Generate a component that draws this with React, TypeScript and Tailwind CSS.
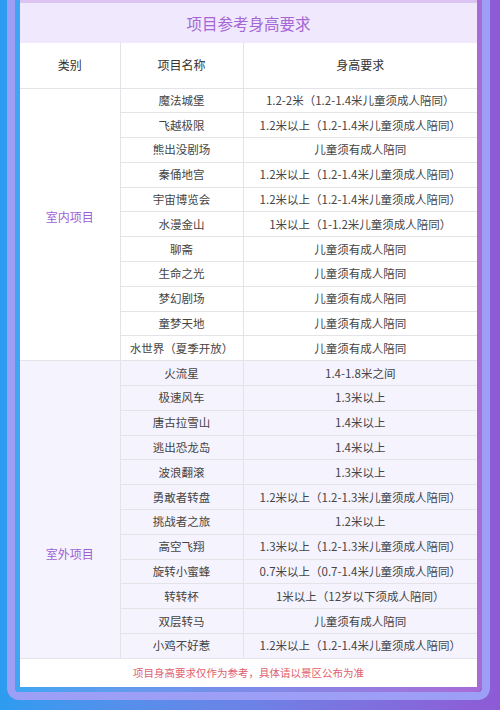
import React from 'react';

type Row = [string, string];

const indoor: Row[] = [
  ['魔法城堡', '1.2-2米（1.2-1.4米儿童须成人陪同）'],
  ['飞越极限', '1.2米以上（1.2-1.4米儿童须成人陪同）'],
  ['熊出没剧场', '儿童须有成人陪同'],
  ['秦俑地宫', '1.2米以上（1.2-1.4米儿童须成人陪同）'],
  ['宇宙博览会', '1.2米以上（1.2-1.4米儿童须成人陪同）'],
  ['水漫金山', '1米以上（1-1.2米儿童须成人陪同）'],
  ['聊斋', '儿童须有成人陪同'],
  ['生命之光', '儿童须有成人陪同'],
  ['梦幻剧场', '儿童须有成人陪同'],
  ['童梦天地', '儿童须有成人陪同'],
  ['水世界（夏季开放）', '儿童须有成人陪同'],
];

const outdoor: Row[] = [
  ['火流星', '1.4-1.8米之间'],
  ['极速风车', '1.3米以上'],
  ['唐古拉雪山', '1.4米以上'],
  ['逃出恐龙岛', '1.4米以上'],
  ['波浪翻滚', '1.3米以上'],
  ['勇敢者转盘', '1.2米以上（1.2-1.3米儿童须成人陪同）'],
  ['挑战者之旅', '1.2米以上'],
  ['高空飞翔', '1.3米以上（1.2-1.3米儿童须成人陪同）'],
  ['旋转小蜜蜂', '0.7米以上（0.7-1.4米儿童须成人陪同）'],
  ['转转杯', '1米以上（12岁以下须成人陪同）'],
  ['双层转马', '儿童须有成人陪同'],
  ['小鸡不好惹', '1.2米以上（1.2-1.4米儿童须成人陪同）'],
];

function Section({ label, rows, shaded, labelPad }: { label: string; rows: Row[]; shaded?: boolean; labelPad: string }) {
  const bg = shaded ? 'bg-[#f5f3fd]' : 'bg-white';
  return (
    <>
      {rows.map(([name, req], i) => (
        <tr key={name} className={`h-[24.8px] ${bg}`}>
          {i === 0 && (
            <td rowSpan={rows.length} className={`border border-[#e3e3e8] border-l-0 align-top text-center text-[12px] text-[#9d5fd4] ${labelPad}`}>
              {label}
            </td>
          )}
          <td className="border border-[#e3e3e8] text-center text-[11.5px] text-[#444] p-0">{name}</td>
          <td className="border border-[#e3e3e8] border-r-0 text-center text-[11.5px] text-[#444] p-0">{req}</td>
        </tr>
      ))}
    </>
  );
}

export default function App() {
  return (
    <div
      className="w-[500px] h-[710px] overflow-hidden bg-gradient-to-r from-[#2c9cf0] via-[#6c82e6] to-[#8e5ad6] pl-[7px] pr-[10px] pb-[10px]"
      style={{ fontFamily: '"Noto Sans CJK SC", "Noto Sans", sans-serif' }}
    >
      <div className="h-full border-x-[8px] border-b-[8px] border-[#9c9ff5] rounded-b-[12px] overflow-hidden">
        <div className="h-full bg-gradient-to-r from-[#3ea6f2] via-[#7c8ce8] to-[#a86bd6] px-[5px] pb-[5px] rounded-b-[6px]">
          <div className="h-full bg-white flex flex-col border-t-[3px] border-[#dcc4f2]">
            <div className="h-[40px] pt-[2px] bg-[#f0e8fc] flex items-center justify-center text-[15.5px] text-[#a466d6]">
              项目参考身高要求
            </div>
            <table className="w-full table-fixed border-collapse">
              <colgroup>
                <col className="w-[100px]" />
                <col className="w-[123px]" />
                <col />
              </colgroup>
              <tbody>
                <tr className="h-[45px]">
                  <td className="border border-[#e3e3e8] border-l-0 border-t-0 text-center text-[12px] text-[#333]">类别</td>
                  <td className="border border-[#e3e3e8] border-t-0 text-center text-[12px] text-[#333]">项目名称</td>
                  <td className="border border-[#e3e3e8] border-r-0 border-t-0 text-center text-[12px] text-[#333]">身高要求</td>
                </tr>
                <Section label="室内项目" rows={indoor} labelPad="pt-[119px]" />
                <Section label="室外项目" rows={outdoor} shaded labelPad="pt-[184px]" />
              </tbody>
            </table>
            <div className="flex-1 flex items-center justify-center text-[10.5px] text-[#e0606e]">
              项目身高要求仅作为参考，具体请以景区公布为准
            </div>
          </div>
        </div>
      </div>
    </div>
  );
}
